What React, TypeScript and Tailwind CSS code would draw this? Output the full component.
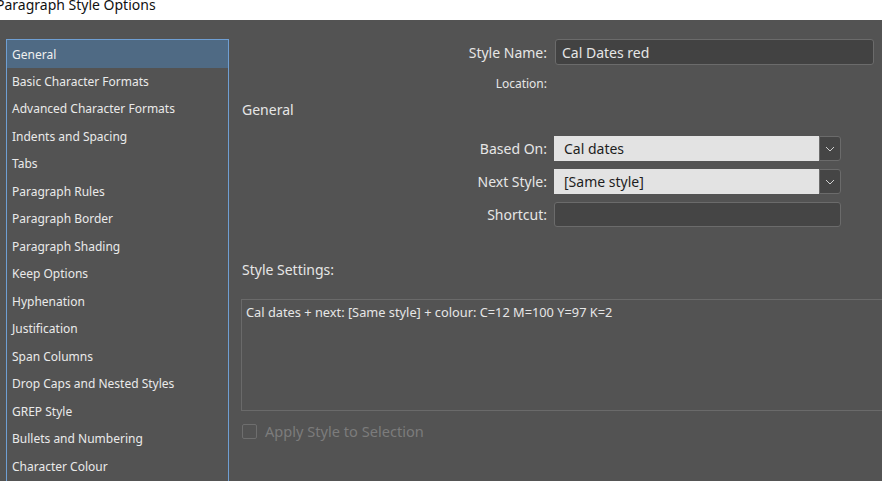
import React from 'react';

const CATEGORIES = [
  'General',
  'Basic Character Formats',
  'Advanced Character Formats',
  'Indents and Spacing',
  'Tabs',
  'Paragraph Rules',
  'Paragraph Border',
  'Paragraph Shading',
  'Keep Options',
  'Hyphenation',
  'Justification',
  'Span Columns',
  'Drop Caps and Nested Styles',
  'GREP Style',
  'Bullets and Numbering',
  'Character Colour',
];

function Chevron() {
  return (
    <svg width="10" height="6" viewBox="0 0 10 6" fill="none">
      <path d="M1 1l4 4 4-4" stroke="#d0d0d0" strokeWidth="1" />
    </svg>
  );
}

function Select({ value }: { value: string }) {
  return (
    <div className="flex h-[25px] w-[287px]">
      <div className="flex flex-1 items-center bg-[#e3e3e3] pl-[10px] text-[14px] text-[#1e1e1e]">{value}</div>
      <div className="flex w-[22px] items-center justify-center rounded-r-[3px] border border-[#6b6b6b] bg-[#454545]">
        <Chevron />
      </div>
    </div>
  );
}

export default function App() {
  return (
    <div className="h-[481px] w-[882px] overflow-hidden bg-[#535353] text-[#e6e6e6]" style={{ fontFamily: '"Noto Sans", "Open Sans", sans-serif' }}>
      {/* title bar */}
      <div className="relative h-[20px] overflow-hidden bg-white">
        <div className="absolute -left-[4px] -top-[6px] text-[14px] text-[#111]">Paragraph Style Options</div>
      </div>

      <div className="flex pl-[6px] pt-[19px]">
        {/* category list */}
        <div className="h-[460px] w-[223px] shrink-0 border border-b-0 border-[#6f9fd3]">
          {CATEGORIES.map((c, i) => (
            <div
              key={c}
              className={
                'flex items-center pl-[5px] text-[12px] ' +
                (i === 0 ? 'h-[28px] bg-[#4f6a84] pt-[2px] text-[#f0f0f0]' : 'h-[27.5px] text-[#eaeaea]')
              }
            >
              {c}
            </div>
          ))}
        </div>

        {/* settings */}
        <div className="flex-1 pl-[13px]">
          <div className="flex items-center">
            <div className="w-[313px] pr-[8px] text-right text-[14px]">Style Name:</div>
            <div className="flex h-[26px] w-[319px] items-center rounded-[3px] border border-[#6b6b6b] bg-[#424242] pl-[6px] text-[14px]">
              Cal Dates red
            </div>
          </div>
          <div className="mt-[10px] flex">
            <div className="w-[313px] pr-[8px] text-right text-[12px]">Location:</div>
          </div>
          <div className="mt-[6px] text-[14px]">General</div>

          <div className="mt-[16px] flex flex-col gap-[8px]">
            <div className="flex items-center">
              <div className="w-[312px] pr-[7px] text-right text-[14px]">Based On:</div>
              <Select value="Cal dates" />
            </div>
            <div className="flex items-center">
              <div className="w-[312px] pr-[7px] text-right text-[14px]">Next Style:</div>
              <Select value="[Same style]" />
            </div>
            <div className="flex items-center">
              <div className="w-[312px] pr-[7px] text-right text-[14px]">Shortcut:</div>
              <div className="h-[25px] w-[287px] rounded-[3px] border border-[#6b6b6b] bg-[#454545]" />
            </div>
          </div>

          <div className="mt-[32px] text-[14px]">Style Settings:</div>
          <div className="-ml-[1px] mt-[19px] h-[112px] border border-r-0 border-[#6a6a6a] pl-[4px] pt-[3px] text-[12.8px]">
            Cal dates + next: [Same style] + colour: C=12 M=100 Y=97 K=2
          </div>
          <div className="mt-[10px] flex items-center gap-[8px]">
            <div className="h-[15px] w-[15px] rounded-[2px] border border-[#6e6e6e]" />
            <div className="text-[14.6px] text-[#7c7c7c]">Apply Style to Selection</div>
          </div>
        </div>
      </div>
    </div>
  );
}
